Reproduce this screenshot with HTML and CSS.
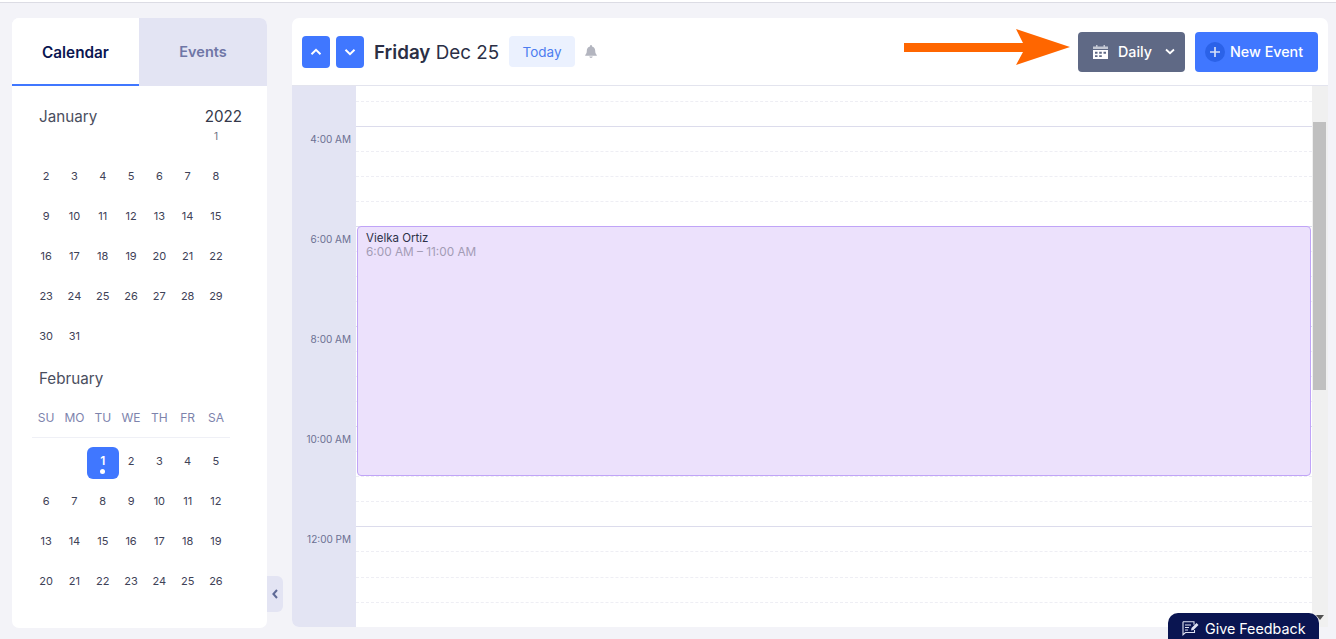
FILE: index.html
```html
<!DOCTYPE html>
<html lang="en">
<head>
<meta charset="utf-8">
<title>Calendar</title>
<link rel="stylesheet" href="styles.css">
</head>
<body>
<div class="app">
  <aside class="side">
    <div class="tabs">
      <div class="tab tab-active">Calendar</div>
      <div class="tab">Events</div>
    </div>
    <div class="month-head"><span>January</span><span class="year">2022</span></div>
    <div class="days days-jan">
      <span class="sat">1</span>
      <span>2</span><span>3</span><span>4</span><span>5</span><span>6</span><span>7</span><span>8</span>
      <span>9</span><span>10</span><span>11</span><span>12</span><span>13</span><span>14</span><span>15</span>
      <span>16</span><span>17</span><span>18</span><span>19</span><span>20</span><span>21</span><span>22</span>
      <span>23</span><span>24</span><span>25</span><span>26</span><span>27</span><span>28</span><span>29</span>
      <span>30</span><span>31</span>
    </div>
    <div class="month-head month-feb"><span>February</span></div>
    <div class="weekdays">
      <span>SU</span><span>MO</span><span>TU</span><span>WE</span><span>TH</span><span>FR</span><span>SA</span>
    </div>
    <div class="days days-feb">
      <span class="tue sel">1<i class="dot"></i></span><span>2</span><span>3</span><span>4</span><span>5</span>
      <span>6</span><span>7</span><span>8</span><span>9</span><span>10</span><span>11</span><span>12</span>
      <span>13</span><span>14</span><span>15</span><span>16</span><span>17</span><span>18</span><span>19</span>
      <span>20</span><span>21</span><span>22</span><span>23</span><span>24</span><span>25</span><span>26</span>
    </div>
    <div class="collapse">
      <svg width="6" height="10" viewBox="0 0 6 10"><path d="M5 1 1.400 5 5 9" fill="none" stroke="#5f6a96" stroke-width="2"/></svg>
    </div>
  </aside>

  <main class="main">
    <header class="bar">
      <button class="nav"><svg width="12" height="8" viewBox="0 0 12 8"><path d="M1.500 6.200 6 1.800l4.500 4.400" fill="none" stroke="#fff" stroke-width="2"/></svg></button>
      <button class="nav"><svg width="12" height="8" viewBox="0 0 12 8"><path d="M1.500 1.800 6 6.200l4.500-4.400" fill="none" stroke="#fff" stroke-width="2"/></svg></button>
      <h1 class="title"><b>Friday</b> Dec 25</h1>
      <button class="today">Today</button>
      <svg class="bell" width="12" height="13" viewBox="0 0 12 13"><path d="M6 0a1 1 0 0 1 1 1v.6c2 .5 3.200 2 3.200 4.200 0 2.300.6 3.200 1.600 4.200v.8H.2V10c1-1 1.600-1.900 1.600-4.200C1.800 3.600 3 2.100 5 1.600V1a1 1 0 0 1 1-1ZM4.200 11.600h3.600A1.900 1.900 0 0 1 6 13a1.900 1.900 0 0 1-1.800-1.400Z" fill="#b3b5bf"/></svg>
      <div class="spacer"></div>
      <button class="daily">
        <svg width="15" height="14" viewBox="0 0 15 14"><path d="M3 0h1.500v1.500h6V0H12v1.500h3V4H0V1.500h3Z" fill="#c4c8d4"/><path d="M0 5h15v9H0Zm2 1.800v2h2.500v-2Zm4.200 0v2h2.600v-2Zm4.300 0v2H13v-2Zm-8.500 3.400V12h2.500v-1.800Zm4.200 0V12h2.600v-1.800Z" fill="#fff" fill-rule="evenodd"/></svg>
        <span class="daily-label">Daily</span>
        <svg width="10" height="7" viewBox="0 0 10 7"><path d="M1 1.500 5 5.200l4-3.700" fill="none" stroke="#fff" stroke-width="1.800"/></svg>
      </button>
      <button class="new">
        <span class="plus"><svg width="10" height="10" viewBox="0 0 10 10"><path d="M5 0v10M0 5h10" stroke="#d5dff8" stroke-width="1.700"/></svg></span>
        New Event
      </button>
    </header>

    <div class="body">
      <div class="times">
        <div class="t">4:00 AM</div>
        <div class="t">6:00 AM</div>
        <div class="t">8:00 AM</div>
        <div class="t">10:00 AM</div>
        <div class="t">12:00 PM</div>
      </div>
      <div class="grid">
        <div class="block block-first"><div class="slot slot-short"></div><div class="slot slot-end"></div></div>
        <div class="block"><div class="slot"></div><div class="slot"></div><div class="slot"></div><div class="slot slot-end"></div></div>
        <div class="block"><div class="slot"></div><div class="slot"></div><div class="slot"></div><div class="slot slot-end"></div></div>
        <div class="block"><div class="slot"></div><div class="slot"></div><div class="slot"></div><div class="slot slot-end"></div></div>
        <div class="block"><div class="slot"></div><div class="slot"></div><div class="slot"></div><div class="slot slot-end"></div></div>
        <div class="block"><div class="slot"></div><div class="slot slot-wide"></div><div class="slot"></div><div class="slot slot-end"></div></div>
        <div class="event">
          <div class="ev-name">Vielka Ortiz</div>
          <div class="ev-time">6:00 AM – 11:00 AM</div>
        </div>
      </div>
      <div class="scroll">
        <div class="thumb"></div>
        <svg class="scroll-arrow" width="8" height="5" viewBox="0 0 8 5"><path d="M0 0h8L4 5Z" fill="#505050"/></svg>
      </div>
    </div>
  </main>
</div>

<svg class="arrow" width="168" height="38" viewBox="0 0 168 38"><path d="M0 14h119L112 0l54 18-54 18 7-13H0Z" fill="#ff6600"/></svg>

<div class="feedback">
  <svg width="17" height="15" viewBox="0 0 17 15"><path d="M1 .7h11v3M1 .7v13l2.500-2.200h9V9" fill="none" stroke="#dfe3f3" stroke-width="1.100"/><path d="M3 4h6M3 6.500h4M3 9h3" stroke="#dfe3f3" stroke-width="1.100"/><path d="m9 9.500.5-2.500 5-5 2 2-5 5Z" fill="#dfe3f3"/></svg>
  Give Feedback
</div>
</body>
</html>
```

FILE: styles.css
```css
* { box-sizing: border-box; }
html, body { margin: 0; height: 100%; overflow: hidden; }
body {
  background: #f3f3f8;
  font-family: Inter, "Noto Sans", sans-serif;
  color: #2d3148;
}
button { font: inherit; border: 0; padding: 0; cursor: pointer; }

.app {
  display: flex;
  gap: 25px;
  height: 100vh;
  padding: 16px 8px 11px 12px;
  border-top: 2px solid #fff;
  box-shadow: inset 0 1px 0 #dcdce4;
}

/* left panel */
.side {
  position: relative;
  width: 255px;
  flex: none;
  height: 610px;
  background: #fff;
  border-radius: 7px;
}
.tabs { display: flex; height: 68px; }
.tab {
  flex: 1;
  display: flex;
  align-items: center;
  justify-content: center;
  padding-bottom: 1px;
  background: #e3e4f3;
  color: #6f76a6;
  font-size: 14.500px;
  font-weight: 600;
  border-top-right-radius: 7px;
}
.tab-active {
  flex: 0 0 127px;
  padding: 2px 0 0;
  background: #fff;
  color: #0a1551;
  font-size: 15.300px;
  border-bottom: 2px solid #4077ff;
  border-radius: 7px 0 0 0;
}
.month-head {
  display: flex;
  justify-content: space-between;
  height: 20px;
  margin-top: 21px;
  padding: 0 25px 0 27px;
  font-size: 15.200px;
  line-height: 20px;
  color: #4a4e5e;
}
.year { color: #34384a; }
.month-feb { margin-top: 13px; }
.days {
  display: grid;
  grid-template-columns: repeat(7, 28.3px);
  grid-auto-rows: 40px;
  margin-left: 20px;
  font-size: 11px;
  color: #3e4257;
}
.days span { display: flex; align-items: center; justify-content: center; }
.days-jan { grid-template-rows: 29px; }
.days-jan .sat {
  grid-column-start: 7;
  height: 18px;
  color: #6a6e7e;
  font-size: 10px;
}
.days-feb { margin-top: 3px; }
.days .tue { grid-column-start: 3; }
.days .sel {
  position: relative;
  width: 32px;
  height: 32px;
  margin: 6px 0 0 -1.800px;
  padding-bottom: 5px;
  background: #4077ff;
  border-radius: 6px;
  color: #fff;
  font-weight: 600;
  font-size: 12px;
}
.dot {
  position: absolute;
  left: 13.500px;
  bottom: 5px;
  width: 5px;
  height: 5px;
  border-radius: 50%;
  background: #fff;
}
.weekdays {
  display: grid;
  grid-template-columns: repeat(7, 28.3px);
  width: 198px;
  height: 36px;
  margin: 13px 0 0 20px;
  padding-top: 9px;
  border-bottom: 1px solid #eff0f6;
  font-size: 12px;
  line-height: 14px;
  color: #7d83ac;
  text-align: center;
}
.collapse {
  position: absolute;
  left: 255px;
  top: 558px;
  width: 16px;
  height: 36px;
  display: flex;
  align-items: center;
  justify-content: center;
  background: #e3e4f3;
  border-radius: 0 6px 6px 0;
}

/* main panel */
.main {
  flex: 1;
  display: flex;
  flex-direction: column;
  height: 609px;
  background: #fff;
  border-radius: 7px 7px 0 7px;
  overflow: hidden;
}
.bar {
  display: flex;
  align-items: center;
  flex: none;
  height: 68px;
  padding: 0 10px;
  border-bottom: 1px solid #e3e4ee;
}
.nav {
  display: flex;
  align-items: center;
  justify-content: center;
  width: 28px;
  height: 32px;
  margin-right: 6px;
  background: #4077ff;
  border-radius: 4px;
}
.title {
  margin: 0 10px 0 4px;
  padding-top: 1px;
  font-size: 18.800px;
  font-weight: 400;
  color: #2b2f45;
  white-space: nowrap;
}
.title b { font-weight: 600; }
.today {
  width: 66px;
  height: 31px;
  background: #ebf1fe;
  color: #4d7df0;
  border-radius: 4px;
  font-size: 13.500px;
}
.bell { margin-left: 10px; }
.spacer { flex: 1; }
.daily {
  display: flex;
  align-items: center;
  width: 107px;
  height: 40px;
  padding: 0 10px 0 15px;
  margin-right: 10px;
  background: #5f6985;
  border-radius: 4px;
  color: #fff;
  font-size: 14.300px;
  font-weight: 500;
}
.daily-label { flex: 1; text-align: left; margin-left: 10px; }
.new {
  display: flex;
  align-items: center;
  gap: 5px;
  width: 123px;
  height: 40px;
  padding-left: 10px;
  background: #4077ff;
  border-radius: 4px;
  color: #fff;
  font-size: 14.300px;
  font-weight: 500;
  white-space: nowrap;
}
.plus {
  display: flex;
  align-items: center;
  justify-content: center;
  width: 20px;
  height: 20px;
  border-radius: 50%;
  background: #2b62e8;
}
.body { display: flex; flex: 1; min-height: 0; }
.times {
  flex: none;
  width: 64px;
  padding-right: 5px;
  background: #e3e4f3;
  font-size: 10px;
  color: #6b7092;
  text-align: right;
}
.t { height: 100px; padding-top: 46px; line-height: 14px; white-space: nowrap; }
.grid { position: relative; flex: 1; min-width: 0; overflow: hidden; }
.block { height: 100px; }
.block-first { height: 41px; }
.slot { height: 25px; border-bottom: 1px dashed #eeeef4; }
.slot-short { height: 16px; }
.slot-wide { height: 26px; }
.slot-end { border-bottom: 1px solid #dcdcec; }
.event {
  position: absolute;
  left: 1px;
  right: 1px;
  top: 140px;
  height: 250px;
  padding: 4px 8px;
  background: #ece1fc;
  border: 1px solid #c0a4f7;
  border-radius: 4px;
  font-size: 11.500px;
  line-height: 14px;
  color: #2d3148;
}
.ev-time { color: #a39cb5; font-size: 11.800px; }
.scroll {
  position: relative;
  flex: none;
  width: 16px;
  background: #f0f0f0;
}
.thumb {
  position: absolute;
  left: 1px;
  right: 2px;
  top: 36px;
  height: 268px;
  background: #c0c0c0;
}
.scroll-arrow { position: absolute; left: 4px; bottom: 7px; }

/* overlays */
.arrow { position: absolute; left: 904px; top: 29px; }
.feedback {
  position: fixed;
  left: 1168px;
  top: 613px;
  width: 151px;
  height: 30px;
  display: flex;
  align-items: center;
  gap: 6px;
  padding: 0 0 0 14px;
  background: #0a1551;
  border-radius: 10px 10px 0 0;
  color: #fff;
  font-size: 14.300px;
  white-space: nowrap;
}
```
